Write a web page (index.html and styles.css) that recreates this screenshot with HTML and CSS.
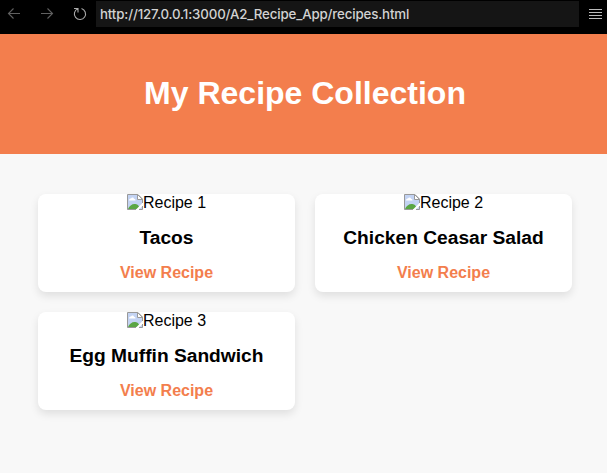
FILE: index.html
```html
<!DOCTYPE html>
<html lang="en">
<head>
<meta charset="utf-8">
<title>My Recipe Collection</title>
<link rel="stylesheet" href="styles.css">
</head>
<body>
<svg class="defs" aria-hidden="true">
  <symbol id="broken" viewBox="0 0 16 16">
    <path d="M.5.5H11L15.5 5v10.500H.5z" fill="#c3d3f3"/>
    <path d="M2 6.500c0-1.500 1-2 2-2 .5-1.300 2.700-1.300 3 .2 1 .1 1.500.8 1.500 1.800z" fill="#fff"/>
    <path d="M1 15c1-3 4-5 6.500-5S12 11 13 15z" fill="#5aa644"/>
    <path d="M8.500 16 16 8.500V11.500L11.500 16z" fill="#fff"/>
    <path d="M9 15.500H.5V.5H11L15.500 5v4M15.500 12v3.500H12" fill="none" stroke="#999"/>
    <path d="M10.500.5V5.500h5z" fill="#fff" stroke="#999"/>
  </symbol>
</svg>
<nav class="browser">
  <svg class="nav-icon dim" viewBox="0 0 14 14"><path d="M13 6.500H1.500M6.500 1.500l-5 5 5 5"/></svg>
  <svg class="nav-icon dim" viewBox="0 0 14 14"><path d="M1 6.500h11.500M7.500 1.500l5 5-5 5"/></svg>
  <svg class="nav-icon reload" viewBox="0 0 14 14"><path d="M1 1.500h4v4M4.800 1.700A5.600 5.600 0 1 0 8.500 1.500"/></svg>
  <div class="address">http://127.0.0.1:3000/A2_Recipe_App/recipes.html</div>
  <svg class="menu" viewBox="0 0 13 11"><path d="M0 1.500h13M0 4.500h13M0 7.500h13M0 10.500h13"/></svg>
</nav>
<header class="header"><h1>My Recipe Collection</h1></header>
<main class="grid">
  <article class="card">
    <div class="photo"><svg class="broken"><use href="#broken"/></svg>Recipe 1</div>
    <h3>Tacos</h3>
    <a class="link">View Recipe</a>
  </article>
  <article class="card">
    <div class="photo"><svg class="broken"><use href="#broken"/></svg>Recipe 2</div>
    <h3>Chicken Ceasar Salad</h3>
    <a class="link">View Recipe</a>
  </article>
  <article class="card">
    <div class="photo"><svg class="broken"><use href="#broken"/></svg>Recipe 3</div>
    <h3>Egg Muffin Sandwich</h3>
    <a class="link">View Recipe</a>
  </article>
</main>
</body>
</html>
```
FILE: styles.css
```css
* { box-sizing: border-box; }
body {
  margin: 0;
  height: 473px;
  overflow: hidden;
  background: #f8f8f8;
  color: #000;
  font-family: "Liberation Sans", Arial, sans-serif;
  font-size: 16px;
}
.defs { display: none; }
.browser {
  display: flex;
  align-items: flex-start;
  height: 34px;
  padding: 1px 5px 0 7px;
  background: #000;
}
.nav-icon {
  width: 14px;
  height: 14px;
  margin: 6px 19px 0 0;
  fill: none;
  stroke: #aaa;
  stroke-width: 1.1;
}
.dim { stroke: #606060; }
.reload { margin-right: 9px; }
.address {
  width: 483px;
  height: 26px;
  padding-left: 4px;
  background: #151515;
  color: #d2d2d2;
  font: 500 13.3px/26px Inter, sans-serif;
  letter-spacing: -.15px;
  white-space: nowrap;
}
.menu {
  width: 13px;
  height: 11px;
  margin: 7px 0 0 10px;
  stroke: #bbb;
}
.header {
  height: 120px;
  padding: 41px 0 0 3px;
  background: #f37e4d;
  color: #fff;
  text-align: center;
}
.header h1 { margin: 0; font-size: 32px; line-height: 36px; }
.grid {
  display: grid;
  grid-template-columns: 257px 257px;
  grid-auto-rows: 98px;
  gap: 20px;
  padding: 40px 35px 0 38px;
}
.card {
  overflow: hidden;
  border-radius: 8px;
  background: #fff;
  box-shadow: 0 4px 8px rgba(0, 0, 0, .1);
  text-align: center;
}
.photo {
  display: flex;
  justify-content: center;
  height: 18px;
  line-height: 18px;
}
.broken { width: 16px; height: 16px; }
.card h3 { margin: 15px 0 14px; font-size: 19.2px; line-height: 22px; }
.link {
  display: block;
  color: #f37e4d;
  font-weight: bold;
  line-height: 20px;
}
```
